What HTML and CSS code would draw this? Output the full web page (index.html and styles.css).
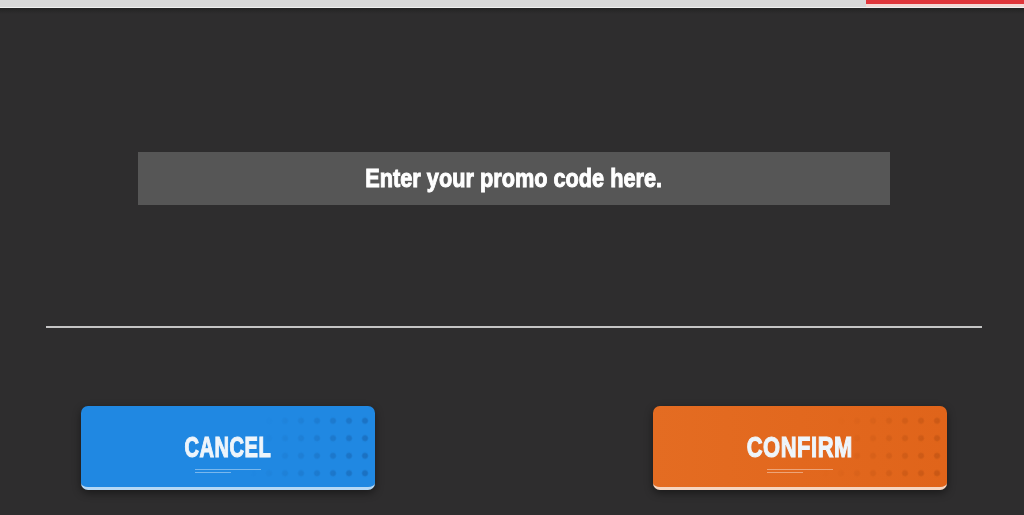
FILE: index.html
```html
<!DOCTYPE html>
<html>
<head>
    <title>Promo Code</title>
    <link rel="stylesheet" href="styles.css">
</head>
<body>
    <div class="top-bar">
        <div class="top-bar-red"></div>
    </div>

    <div class="promo-box">
        <span class="promo-text">Enter your promo code here.</span>
    </div>

    <div class="divider"></div>

    <div class="button-row">
        <div class="btn btn-cancel">
            <div class="dots"></div>
            <span class="btn-label">CANCEL</span>
            <div class="btn-note"><i></i><i class="short"></i></div>
        </div>
        <div class="btn btn-confirm">
            <div class="dots"></div>
            <span class="btn-label">CONFIRM</span>
            <div class="btn-note"><i></i><i class="short"></i></div>
        </div>
    </div>
</body>
</html>
```

FILE: styles.css
```css
html, body {
    margin: 0;
    height: 515px;
    overflow: hidden;
}

body {
    background: linear-gradient(#232323 8px, #2e2d2e 14px);
    font-family: "Liberation Sans", Arial, sans-serif;
    color: #fff;
}

.top-bar {
    height: 7px;
    background: #d8d8d8;
    border-bottom: 1px solid #f0f0f0;
    display: flex;
    justify-content: flex-end;
}

.top-bar-red {
    width: 158px;
    height: 4px;
    background: #e0353a;
    border-bottom: 3px solid #f3d9d5;
}

.promo-box {
    margin: 144px 134px 0 138px;
    height: 53px;
    background: #565656;
    display: flex;
    align-items: center;
    justify-content: center;
}

.promo-text {
    font-size: 26px;
    font-weight: bold;
    white-space: nowrap;
    display: inline-block;
    transform: scaleX(0.835);
    -webkit-text-stroke: 1px #fff;
    filter: blur(0.4px);
}

.divider {
    margin: 121px 42px 0 46px;
    height: 2px;
    background: #c4c4c4;
}

.button-row {
    margin: 78px 77px 0 81px;
    display: flex;
    justify-content: space-between;
}

.btn {
    position: relative;
    width: 294px;
    height: 84px;
    box-sizing: border-box;
    border-radius: 7px;
    border-bottom: 3px solid #fff;
    box-shadow: 0 3px 8px rgba(0, 0, 0, 0.45);
    display: flex;
    flex-direction: column;
    align-items: center;
    overflow: hidden;
}

.btn-cancel {
    background: #2088e2;
    border-bottom-color: #b5d8f5;
}

.btn-confirm {
    background: linear-gradient(90deg, #e46c22, #e0641a);
    border-bottom-color: #f6d5c0;
}

.btn-label {
    margin-top: 26px;
    font-size: 30px;
    line-height: 30px;
    font-weight: bold;
    display: inline-block;
    color: #eef5fb;
    letter-spacing: 0.8px;
    -webkit-text-stroke: 1.2px #eef5fb;
    filter: blur(0.5px);
}

.btn-cancel .btn-label {
    transform: scaleX(0.67);
}

.btn-confirm .btn-label {
    transform: scaleX(0.73);
}

.btn-note {
    margin-top: 7px;
    display: flex;
    flex-direction: column;
    gap: 2px;
    width: 66px;
    filter: blur(0.6px);
}

.btn-note i {
    display: block;
    height: 1px;
    background: rgba(255, 255, 255, 0.4);
}

.btn-note .short {
    width: 36px;
}

.dots {
    position: absolute;
    right: 0;
    top: 6px;
    width: 130px;
    height: 72px;
    background-image: radial-gradient(circle, rgba(15, 60, 120, 0.3) 0 2.2px, transparent 3.8px);
    background-size: 16px 17.5px;
    background-position: right 2px top 0;
    -webkit-mask-image: linear-gradient(105deg, transparent 15%, #000 90%);
    mask-image: linear-gradient(105deg, transparent 15%, #000 90%);
}

.btn-confirm .dots {
    background-image: radial-gradient(circle, rgba(150, 60, 10, 0.3) 0 2.2px, transparent 3.8px);
}
```
